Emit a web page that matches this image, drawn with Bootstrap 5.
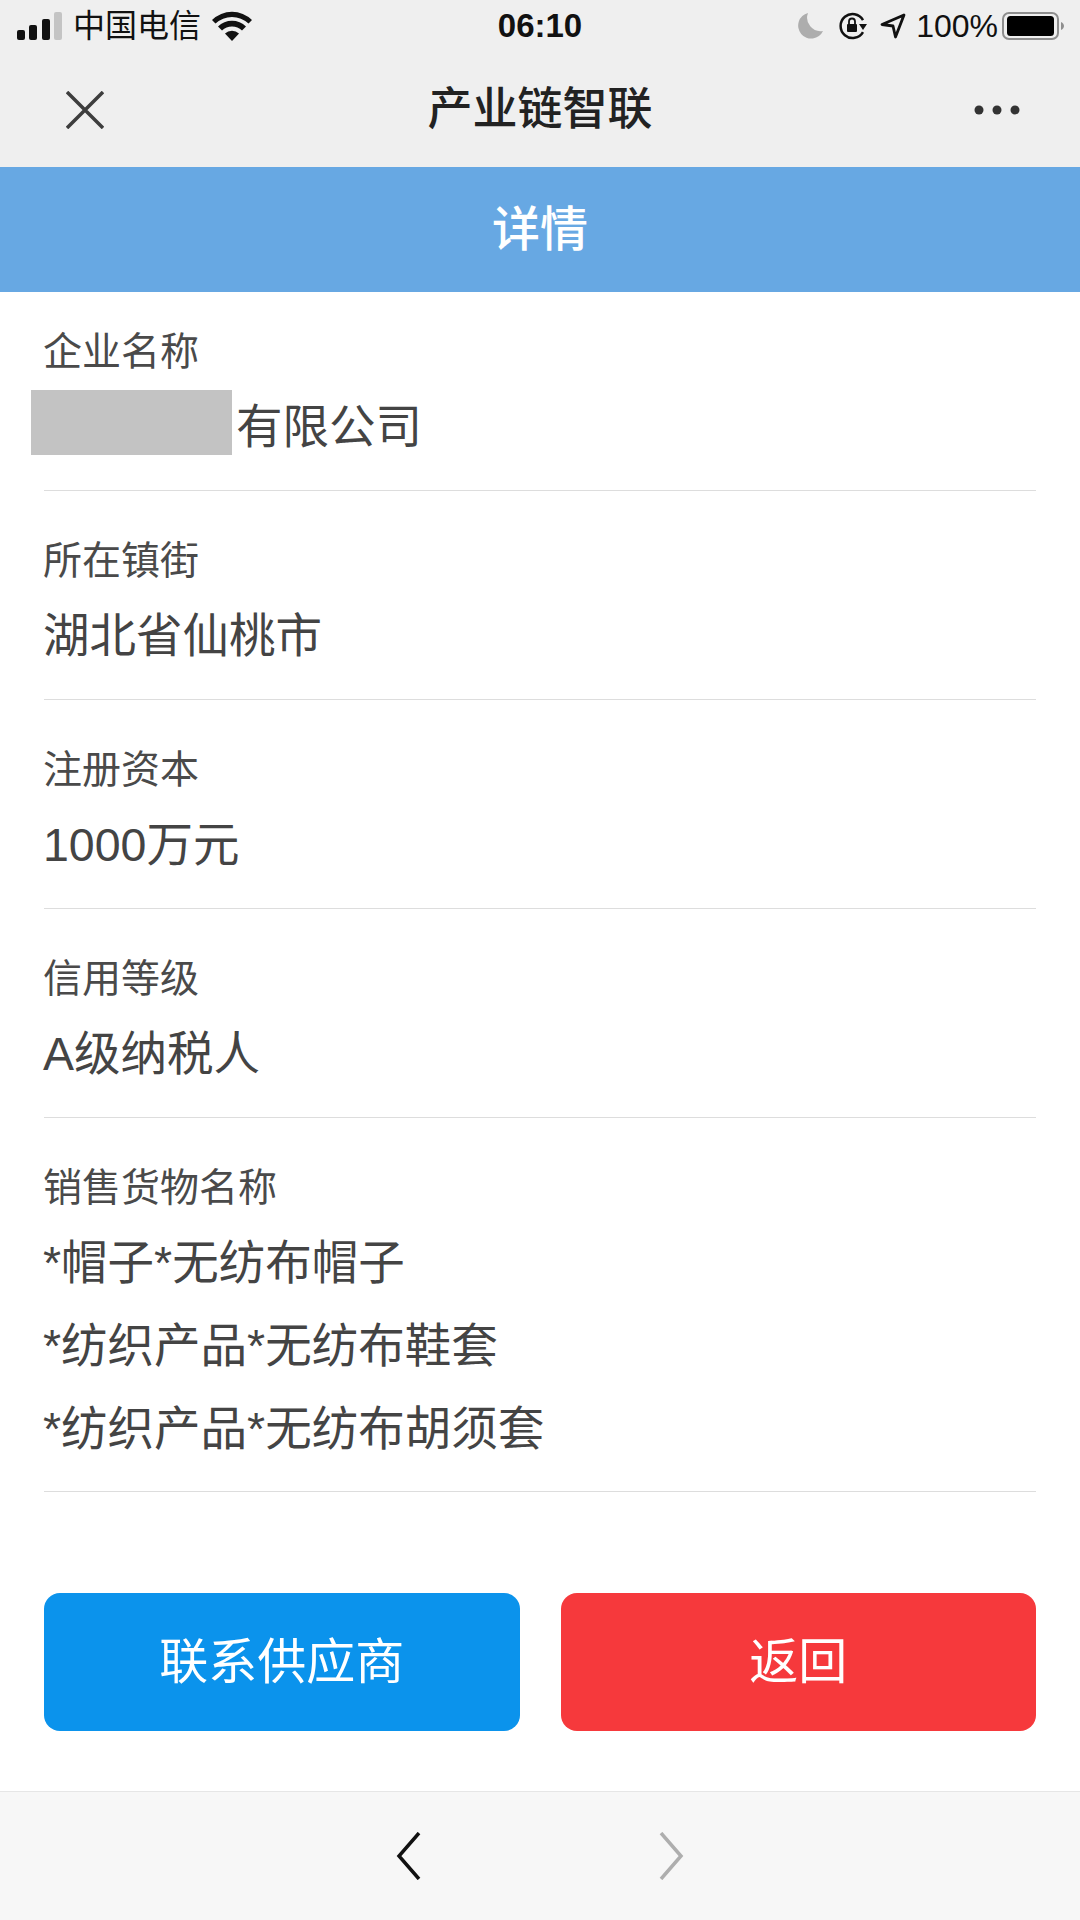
<!DOCTYPE html>
<html lang="zh-CN">
<head>
    <meta charset="UTF-8">
    <title>产业链智联</title>
    <link href="https://cdn.jsdelivr.net/npm/bootstrap@5.3.2/dist/css/bootstrap.min.css" rel="stylesheet">
    <style>
        body { width: 1080px; height: 1920px; overflow: hidden; background: #fff; color: #444; font-family: "Liberation Sans", "Noto Sans CJK SC", sans-serif; }
        .top-area { background: #efefef; height: 167px; }
        .status-line { height: 52px; padding: 0 14px 0 17px; color: #111; font-size: 32px; line-height: 52px; }
        .status-time { position: absolute; left: 0; right: 0; text-align: center; font-weight: 700; font-size: 33px; }
        .carrier { margin-left: 10px; }
        .wifi-icon { margin-left: 11px; }
        .lock-icon { margin-left: 14px; }
        .arrow-icon { margin-left: 12px; }
        .battery-text { margin-left: 10px; }
        .app-nav { height: 115px; padding: 0 60px 0 66px; }
        .app-title { position: absolute; left: 0; right: 0; text-align: center; font-size: 45px; font-weight: 500; color: #222; line-height: 115px; }
        .page-head { height: 125px; background: #67a8e3; color: #fff; font-size: 48px; font-weight: 500; }
        .info-list { padding: 0 44px; }
        .info-row { padding: 33px 0 21px; border-bottom: 1px solid #ddd; }
        .info-row:first-child { padding-top: 23px; }
        .info-row:last-child { padding-bottom: 20px; }
        .info-label { font-size: 39px; line-height: 73px; margin-bottom: -2px; margin-left: -1px; color: #4a4a4a; }
        .info-value { font-size: 46.5px; line-height: 83px; margin-left: -1px; color: #444; }
        .redact-gap { display: inline-block; position: relative; width: 193px; height: 1px; }
        .redact-gap::after { content: ""; position: absolute; left: -12px; top: -52px; width: 201px; height: 65px; background: #c3c3c3; }
        .action-row { padding: 101px 44px 0; gap: 41px; }
        .action-btn { flex: 1 1 0; height: 138px; border: 0; border-radius: 16px; color: #fff; font-size: 49px; line-height: 1; }
        .action-blue, .action-blue:hover { background: #0b93ec; color: #fff; }
        .action-red, .action-red:hover { background: #f6393c; color: #fff; }
        .bottom-bar { height: 129px; background: #f7f7f7; border-top: 1px solid #e6e6e6; gap: 238px; }
    </style>
</head>
<body class="d-flex flex-column">
<div class="top-area position-relative">
    <div class="status-line d-flex align-items-center justify-content-between position-relative">
        <div class="status-time">06:10</div>
        <div class="d-flex align-items-center">
            <svg width="46" height="28" viewBox="0 0 46 28"><rect x="0" y="18" width="8" height="10" rx="2" fill="#111"/><rect x="12" y="13" width="8" height="15" rx="2" fill="#111"/><rect x="25" y="7" width="8" height="21" rx="2" fill="#111"/><rect x="37" y="0" width="8" height="28" rx="2" fill="#c4c4c4"/></svg>
            <span class="carrier">中国电信</span>
            <svg class="wifi-icon" width="40" height="30" viewBox="0 0 40 30"><path d="M20 30 13 22.500A10 10 0 0 1 27 22.500Z" fill="#111"/><path d="M10 19.500 6 15.500A20 20 0 0 1 34 15.500L30 19.500A14.500 14.500 0 0 0 10 19.500Z" fill="#111"/><path d="M3.500 12.500 0 9A28.500 28.500 0 0 1 40 9L36.500 12.500A24 24 0 0 0 3.500 12.500Z" fill="#111"/></svg>
        </div>
        <div class="d-flex align-items-center position-relative">
            <svg width="26" height="26" viewBox="0 0 26 26"><path d="M10 0A13 13 0 1 0 25 18A13.500 13.500 0 0 1 10 0Z" fill="#adadad"/></svg>
            <svg class="lock-icon" width="30" height="28" viewBox="0 0 30 28" fill="none"><path d="M25 8A12 12 0 1 0 25 20" stroke="#111" stroke-width="2.500"/><path d="M21 12h8l-4 6Z" fill="#111"/><rect x="9" y="12" width="10" height="8" rx="1" fill="#111"/><path d="M11 12V9.500a3 3 0 0 1 6 0V12" stroke="#111" stroke-width="1.800"/></svg>
            <svg class="arrow-icon" width="26" height="26" viewBox="0 0 26 26" fill="none"><path d="M24 2 2 11.500 13 13 15.500 24Z" stroke="#111" stroke-width="2.800" stroke-linejoin="round"/></svg>
            <span class="battery-text">100%</span>
            <svg class="ms-1" width="64" height="30" viewBox="0 0 64 30"><rect x="1" y="2" width="55" height="26" rx="6" fill="none" stroke="#8e8e8e" stroke-width="2"/><rect x="5" y="5" width="47" height="20" rx="3.500" fill="#000"/><path d="M59 11c2 1 3 2.500 3 4s-1 3-3 4Z" fill="#8e8e8e"/></svg>
        </div>
    </div>
    <div class="app-nav d-flex align-items-center justify-content-between position-relative">
        <div class="app-title">产业链智联</div>
        <svg class="position-relative" width="38" height="38" viewBox="0 0 38 38"><path d="M1 1 37 37M37 1 1 37" stroke="#3d3d3d" stroke-width="3.500"/></svg>
        <svg class="position-relative" width="46" height="10" viewBox="0 0 46 10"><circle cx="5" cy="5" r="4.500" fill="#333"/><circle cx="23" cy="5" r="4.500" fill="#333"/><circle cx="41" cy="5" r="4.500" fill="#333"/></svg>
    </div>
</div>
<div class="page-head d-flex align-items-center justify-content-center">详情</div>
<div class="info-list">
    <div class="info-row">
        <div class="info-label">企业名称</div>
        <div class="info-value"><span class="redact-gap"></span>有限公司</div>
    </div>
    <div class="info-row">
        <div class="info-label">所在镇街</div>
        <div class="info-value">湖北省仙桃市</div>
    </div>
    <div class="info-row">
        <div class="info-label">注册资本</div>
        <div class="info-value">1000万元</div>
    </div>
    <div class="info-row">
        <div class="info-label">信用等级</div>
        <div class="info-value">A级纳税人</div>
    </div>
    <div class="info-row">
        <div class="info-label">销售货物名称</div>
        <div class="info-value">*帽子*无纺布帽子</div>
        <div class="info-value">*纺织产品*无纺布鞋套</div>
        <div class="info-value">*纺织产品*无纺布胡须套</div>
    </div>
</div>
<div class="action-row d-flex">
    <button type="button" class="btn action-btn action-blue">联系供应商</button>
    <button type="button" class="btn action-btn action-red">返回</button>
</div>
<div class="bottom-bar mt-auto d-flex align-items-center justify-content-center">
    <svg width="25" height="48" viewBox="0 0 25 48" fill="none"><path d="M23 1 3 24 23 47" stroke="#111" stroke-width="3.500"/></svg>
    <svg width="25" height="48" viewBox="0 0 25 48" fill="none"><path d="M2 1 22 24 2 47" stroke="#aeaeae" stroke-width="3.500"/></svg>
</div>
<script src="https://cdn.jsdelivr.net/npm/bootstrap@5.3.2/dist/js/bootstrap.bundle.min.js"></script>
</body>
</html>
